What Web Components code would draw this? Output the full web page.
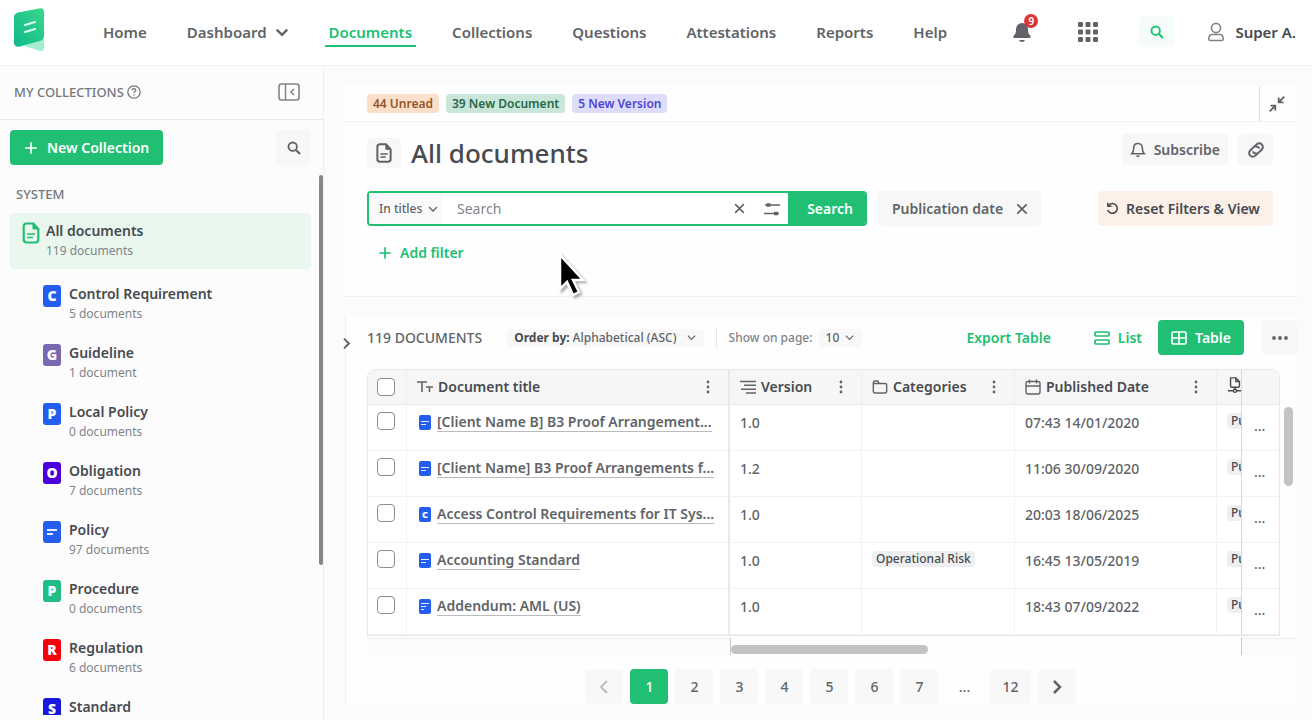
<!DOCTYPE html>
<html lang="en">
<head>
<meta charset="utf-8">
<meta name="viewport" content="width=device-width, initial-scale=1">
<title>All documents</title>
<style>
  :root {
    --green: #20bf73;
    --green-soft: #e9f7ef;
    --ink: #474b50;
    --text: #606468;
    --muted: #808488;
    --line: #e6e7e8;
    --fill: #f7f7f7;
  }
  * { box-sizing: border-box; }
  body {
    margin: 0;
    height: 100vh;
    display: flex;
    flex-direction: column;
    overflow: hidden;
    background: #fbfbfb;
    color: var(--text);
    font-family: "Noto Sans", "Open Sans", sans-serif;
    font-size: 14px;
    font-weight: 500;
    line-height: 20px;
  }
  .layout { flex: 1; min-height: 0; display: flex; }
  .content {
    flex: 1;
    min-width: 0;
    display: flex;
    flex-direction: column;
    margin: 20px 15px 20px 21px;
  }
</style>
</head>
<body>
  <app-header></app-header>
  <div class="layout">
    <collections-panel></collections-panel>
    <main class="content">
      <documents-header></documents-header>
      <documents-view></documents-view>
    </main>
  </div>
  <mouse-pointer></mouse-pointer>

<script>
const ICONS = {
  logo: `<svg viewBox="0 0 32 44"><defs><linearGradient id="g" x1="1" y1="0" x2="0" y2="1"><stop offset="0" stop-color="#3bd68c"/><stop offset="1" stop-color="#10b98b"/></linearGradient></defs>
    <g stroke="none"><path d="M9 38l21-7v9q0 3-3 3-3 0-6-2z" fill="#a5efd0"/>
    <path d="M0 9q0-3 4-4.500L25 .5q5-1 5 4V28q0 4-4 5L6 38.500q-6 1-6-4z" fill="url(#g)"/></g>
    <path d="M11 17l10-3M11 24l10-3" stroke="#d9fff0" stroke-width="2" stroke-linecap="round"/></svg>`,
  chevron: `<svg viewBox="0 0 12 12"><path d="M1.500 4L6 8.500 10.500 4" stroke-width="2"/></svg>`,
  thin: `<svg viewBox="0 0 12 12"><path d="M2 4l4 4 4-4" stroke-width="1.300"/></svg>`,
  left: `<svg viewBox="0 0 16 16"><path d="M11 2L5 8l6 6" stroke-width="2"/></svg>`,
  right: `<svg viewBox="0 0 16 16"><path d="M5 2l6 6-6 6" stroke-width="2.500"/></svg>`,
  bellFull: `<svg viewBox="0 0 20 20"><path d="M10 1c-4 .5-6 3-6 6.500 0 3-.5 4.500-2.500 6.500-.8 1 0 2 1 2h15c1 0 1.800-1 1-2-2-2-2.500-3.500-2.500-6.500C16 4 14 1.500 10 1z" fill="currentColor" stroke="none"/><path d="M7 18h6q-.5 2-3 2t-3-2z" fill="currentColor" stroke="none"/></svg>`,
  bell: `<svg viewBox="0 0 16 16"><path d="M8 1.500C5 1.500 3.700 3.700 3.700 6c0 3-.5 4.200-1.900 5.800h12.400C12.800 10.200 12.300 9 12.300 6c0-2.300-1.300-4.500-4.300-4.500z" stroke-width="1.600"/><path d="M6 13.500h4q-.5 1.700-2 1.700t-2-1.700z" fill="currentColor" stroke="none"/></svg>`,
  apps: `<svg viewBox="0 0 20 20"><g fill="currentColor" stroke="none"><rect width="5" height="5" rx="1"/><rect x="7.500" width="5" height="5" rx="1"/><rect x="15" width="5" height="5" rx="1"/><rect y="7.500" width="5" height="5" rx="1"/><rect x="7.500" y="7.500" width="5" height="5" rx="1"/><rect x="15" y="7.500" width="5" height="5" rx="1"/><rect y="15" width="5" height="5" rx="1"/><rect x="7.500" y="15" width="5" height="5" rx="1"/><rect x="15" y="15" width="5" height="5" rx="1"/></g></svg>`,
  search: `<svg viewBox="0 0 14 14"><circle cx="5.700" cy="5.700" r="4.200" stroke-width="1.900"/><path d="M9 9l4 4" stroke-width="2.200"/></svg>`,
  user: `<svg viewBox="0 0 16 20"><circle cx="8" cy="6" r="4.600"/><path d="M4 12.500h8q3.200.5 3.200 4.200 0 1.800-1.500 1.800H2.300q-1.500 0-1.500-1.800 0-3.700 3.200-4.200z"/></svg>`,
  help: `<svg viewBox="0 0 14 14"><circle cx="7" cy="7" r="6.200" stroke-width="1.300"/><path d="M5.200 5.500q.1-1.800 1.800-1.800t1.800 1.500q0 .8-1 1.300-.8.400-.8 1.400M7 9.300v1.200" stroke-width="1.300"/></svg>`,
  collapse: `<svg viewBox="0 0 22 18"><rect x="1" y="1" width="20" height="16" rx="2.500"/><path d="M7.500 1v16M16 6l-3 3 3 3" stroke-width="1.500"/></svg>`,
  plus: `<svg viewBox="0 0 12 12"><path d="M6 1v10M1 6h10" stroke-width="1.400"/></svg>`,
  doc: `<svg viewBox="0 0 18 22"><path d="M4.500 1.500h6.800l5 5.500v10.500q0 3-3 3H4.700q-3 0-3-3V4.500q0-3 2.800-3z" stroke-width="2.200"/><path d="M11 1.500V7h5z" fill="currentColor" stroke-width="1"/><path d="M5 12h8M5 15.500h6" stroke-width="1.700"/></svg>`,
  shrink: `<svg viewBox="0 0 16 16"><path d="M15.300.7L10 6M9.700 1.500v4.800h4.800M.7 15.300L6 10M1.500 9.700h4.800v4.800" stroke-width="1.800"/></svg>`,
  link: `<svg viewBox="0 0 18 18"><g transform="rotate(-45 9 9)" stroke-width="2"><path d="M8 12.500H4.500a3.600 3.600 0 010-7.200H9a3.600 3.600 0 013.300 5"/><path d="M10 5.500h3.500a3.600 3.600 0 010 7.200H9a3.600 3.600 0 01-3.300-5"/></g></svg>`,
  close: `<svg viewBox="0 0 12 12"><path d="M2 2l8 8M10 2l-8 8" stroke-width="1.500"/></svg>`,
  sliders: `<svg viewBox="0 0 16 14"><path d="M1 3h15M0 11.500h15" stroke-width="1.500"/><path d="M2.500 3h4M10 11.500h4" stroke-width="3.500"/></svg>`,
  reset: `<svg viewBox="0 0 14 14"><path d="M3 3.200a5.300 5.300 0 11-1.200 5.300" stroke-width="1.700"/><path d="M2 .8v3.600h3.800" stroke-width="1.700"/></svg>`,
  list: `<svg viewBox="0 0 16 14"><rect x="1" y="1" width="14" height="4" rx="1" stroke-width="1.700"/><rect x="1" y="9" width="14" height="4" rx="1" stroke-width="1.700"/></svg>`,
  table: `<svg viewBox="0 0 16 14"><rect x="1" y="1" width="14" height="12" rx="1.500" stroke-width="1.700"/><path d="M1 7h14M8 1v12" stroke-width="1.700"/></svg>`,
  more: `<svg viewBox="0 0 16 4"><g fill="currentColor" stroke="none"><circle cx="2" cy="2" r="1.900"/><circle cx="8" cy="2" r="1.900"/><circle cx="14" cy="2" r="1.900"/></g></svg>`,
  kebab: `<svg viewBox="0 0 4 14"><g fill="currentColor" stroke="none"><circle cx="2" cy="2" r="1.400"/><circle cx="2" cy="7" r="1.400"/><circle cx="2" cy="12" r="1.400"/></g></svg>`,
  letters: `<svg viewBox="0 0 16 14"><path d="M0 2h10M5 2v10M9 7h7M12.500 7v5"/></svg>`,
  lines: `<svg viewBox="0 0 16 14"><path d="M0 1.500h16M4 5.300h12M1 9.200h15M6 13h10"/></svg>`,
  folder: `<svg viewBox="0 0 18 16"><path d="M1.500 13V3q0-1.800 1.800-1.800h3.200L8 4h6.700q1.800 0 1.800 1.800V13q0 1.800-1.800 1.800H3.300Q1.500 14.800 1.500 13zM1.500 4H8"/></svg>`,
  calendar: `<svg viewBox="0 0 16 16"><rect x="1" y="2.500" width="14" height="12.500" rx="2" stroke-width="1.400"/><path d="M1 7h14M4.500.5v4M11.500.5v4" stroke-width="1.400"/></svg>`,
  status: `<svg viewBox="0 0 16 18"><path d="M3 1h6l4 4v5q0 1.500-1.500 1.500h-7Q3 11.500 3 10zM9 1v4h4M8 11.500V14M0 15.500h6M10 15.500h6"/><circle cx="8" cy="15.500" r="1.800"/></svg>`
};

const TYPES = {
  C: { colour: '#245ef0', mark: 'C' },
  G: { colour: '#7a68b3', mark: 'G' },
  L: { colour: '#245ef0', mark: 'P' },
  O: { colour: '#4b00dc', mark: 'O' },
  policy: { colour: '#245ef0', lines: '<i></i><i class="short"></i>' },
  addendum: { colour: '#245ef0', lines: '<i></i><i class="short"></i><i class="dot"></i>' },
  P: { colour: '#20bd87', mark: 'P' },
  R: { colour: '#f5000c', mark: 'R' },
  S: { colour: '#1717dd', mark: 'S' }
};

const COLLECTIONS = [
  ['C', 'Control Requirement', '5 documents'],
  ['G', 'Guideline', '1 document'],
  ['L', 'Local Policy', '0 documents'],
  ['O', 'Obligation', '7 documents'],
  ['policy', 'Policy', '97 documents'],
  ['P', 'Procedure', '0 documents'],
  ['R', 'Regulation', '6 documents'],
  ['S', 'Standard', '']
];

const DOCUMENTS = [
  { type: 'policy', title: '[Client Name B] B3 Proof Arrangement...', version: '1.0', date: '07:43 14/01/2020' },
  { type: 'policy', title: '[Client Name] B3 Proof Arrangements f...', version: '1.2', date: '11:06 30/09/2020' },
  { type: 'C', title: 'Access Control Requirements for IT Sys...', version: '1.0', date: '20:03 18/06/2025' },
  { type: 'policy', title: 'Accounting Standard', version: '1.0', category: 'Operational Risk', date: '16:45 13/05/2019' },
  { type: 'addendum', title: 'Addendum: AML (US)', version: '1.0', date: '18:43 07/09/2022' }
];

// Shared by every shadow root
const BASE = `
  * { box-sizing: border-box; }
  button, input, select { font: inherit; color: inherit; margin: 0; padding: 0; border: 0; background: none; }
  button { cursor: pointer; }
  a { color: inherit; text-decoration: none; }
  select { appearance: none; cursor: pointer; }
`;

class BaseElement extends HTMLElement {
  constructor() {
    super();
    this.attachShadow({ mode: 'open' });
  }

  connectedCallback() {
    const template = document.createElement('template');
    template.innerHTML = `<style>${BASE}</style>` + this.render();
    this.shadowRoot.replaceChildren(template.content.cloneNode(true));
  }
}

class UiIcon extends BaseElement {
  render() {
    return `
      <style>
        :host { display: inline-block; flex: none; width: 16px; height: 16px; }
        svg { display: block; width: 100%; height: 100%; fill: none; stroke: currentColor; stroke-width: 1.600; overflow: visible; }
      </style>
      ${ICONS[this.getAttribute('name')]}
    `;
  }
}

class TypeBadge extends BaseElement {
  render() {
    const type = TYPES[this.getAttribute('type')];
    return `
      <style>
        :host {
          display: inline-flex; flex-direction: column; align-items: center; justify-content: center;
          flex: none; width: 18px; height: 22px; border-radius: 3px;
          background: ${type.colour}; color: #fff;
          font-size: 14px; font-weight: 900; line-height: 22px;
        }
        :host([small]) { width: 12px; height: 15px; border-radius: 2px; font-size: 9px; line-height: 15px; }
        i { width: 10px; height: 2px; margin: 1px 0; background: #e4ecff; }
        .short { width: 6px; margin-right: 4px; }
        .dot { width: 3px; margin-right: 7px; }
        :host([small]) i { width: 8px; height: 1px; }
        :host([small]) .short { width: 5px; margin-right: 3px; }
        :host([small]) .dot { width: 3px; margin-right: 5px; }
      </style>
      ${type.mark || type.lines}
    `;
  }
}

class UiTag extends BaseElement {
  render() {
    return `
      <style>
        :host {
          display: inline-block; padding: 0 6px; border-radius: 4px;
          font-size: 12px; font-weight: 600; line-height: 19px; background: #eeeff0; white-space: nowrap;
        }
        :host([tone="orange"]) { background: #fbdfc8; color: #94552b; }
        :host([tone="green"]) { background: #c9e6d8; color: #28694b; }
        :host([tone="violet"]) { background: #dddcfb; color: #4e46ce; }
        :host([tone="grey"]) { padding: 0 4px; font-weight: 500; line-height: 16px; color: var(--ink); }
      </style>
      <slot></slot>
    `;
  }
}

class UiButton extends BaseElement {
  render() {
    return `
      <style>
        :host { display: inline-flex; flex: none; }
        button {
          display: flex; align-items: center; justify-content: center; gap: 8px;
          height: 35px; min-width: 35px; padding: 0 8px; border-radius: 4px;
          font-weight: 600; white-space: nowrap;
        }
        :host([kind="primary"]) button { padding: 0 13px; background: var(--green); color: #fff; }
        :host([kind="soft"]) button { background: var(--fill); }
        :host([kind="warm"]) button { padding: 0 13px 0 8px; background: #fcf0e8; color: var(--ink); gap: 7px; }
        :host([kind="link"]) button { color: var(--green); }
        :host([kind="chip"]) button { padding: 0 12px 0 14px; gap: 12px; background: var(--fill); }
        :host([low]) button { height: 31px; }
        :host([wide]) button { padding: 0 14px; gap: 9px; }
      </style>
      <button type="button" aria-label="${this.getAttribute('label') || this.textContent.trim()}"><slot></slot></button>
    `;
  }
}

class NavItem extends BaseElement {
  render() {
    return `
      <style>
        :host { display: block; }
        a {
          display: flex; align-items: center; gap: 8px; padding: 5px 4px 3px;
          border-bottom: 2px solid transparent; font-weight: 600; white-space: nowrap;
        }
        :host([active]) a { color: var(--green); border-color: var(--green); }
      </style>
      <a href="#"><slot></slot></a>
    `;
  }
}

class AppHeader extends BaseElement {
  render() {
    return `
      <style>
        :host {
          display: flex; align-items: center; flex: none; height: 66px; padding: 0 16px 2px 14px;
          background: #fff; border-bottom: 1px solid #f3f3f3; font-size: 15px;
        }
        .logo { width: 32px; height: 44px; }
        nav { display: flex; gap: 32px; margin-left: 53px; }
        nav ui-icon { width: 14px; height: 14px; }
        .tools { display: flex; align-items: center; margin-left: auto; color: var(--text); }
        .bell { position: relative; display: flex; margin-right: 46px; }
        .bell ui-icon, .apps ui-icon { width: 20px; height: 20px; display: block; }
        .count {
          position: absolute; top: -8px; right: -6px; width: 14px; height: 14px; border-radius: 7px;
          background: #d93636; color: #fff; font-size: 10px; font-weight: 600; line-height: 14px;
        }
        .apps { margin-right: 41px; }
        .find { margin-right: 34px; --fill: #f6fdf9; color: var(--green); }
        .find ui-icon { width: 14px; height: 14px; }
        .user { display: flex; align-items: center; gap: 11px; color: var(--ink); font-weight: 600; }
        .user ui-icon { width: 16px; height: 20px; color: var(--muted); }
      </style>
      <a href="#" aria-label="Start"><ui-icon class="logo" name="logo"></ui-icon></a>
      <nav>
        <nav-item>Home</nav-item>
        <nav-item>Dashboard <ui-icon name="chevron"></ui-icon></nav-item>
        <nav-item active>Documents</nav-item>
        <nav-item>Collections</nav-item>
        <nav-item>Questions</nav-item>
        <nav-item>Attestations</nav-item>
        <nav-item>Reports</nav-item>
        <nav-item>Help</nav-item>
      </nav>
      <div class="tools">
        <button class="bell" type="button" aria-label="Notifications"><ui-icon name="bellFull"></ui-icon><span class="count">9</span></button>
        <button class="apps" type="button" aria-label="Apps"><ui-icon name="apps"></ui-icon></button>
        <ui-button class="find" kind="soft" low label="Find"><ui-icon name="search"></ui-icon></ui-button>
        <a class="user" href="#"><ui-icon name="user"></ui-icon>Super A.</a>
      </div>
    `;
  }
}

class CollectionItem extends BaseElement {
  render() {
    return `
      <style>
        :host { display: block; margin-left: 33px; height: 59px; }
        :host([active]) { margin: 0 8px 7px 0; height: 56px; border-radius: 4px; background: var(--green-soft); }
        a { display: flex; align-items: flex-start; gap: 8px; padding-top: 8px; }
        :host([active]) a { padding-left: 12px; gap: 6px; }
        .text { display: flex; flex-direction: column; }
        .name { color: var(--ink); font-weight: 600; line-height: 20px; }
        .count { color: var(--muted); font-size: 12px; font-weight: 400; line-height: 20px; }
        ::slotted(*) { margin-top: 1px; }
      </style>
      <a href="#">
        <slot></slot>
        <span class="text">
          <span class="name">${this.getAttribute('name')}</span>
          <span class="count">${this.getAttribute('count')}</span>
        </span>
      </a>
    `;
  }
}

class CollectionsPanel extends BaseElement {
  render() {
    const items = COLLECTIONS.map(([type, name, count]) => `
      <collection-item name="${name}" count="${count}"><type-badge type="${type}"></type-badge></collection-item>
    `).join('');

    return `
      <style>
        :host {
          display: flex; flex-direction: column; flex: none; width: 324px;
          background: #fcfcfc; border-right: 1px solid #f0f0f0; padding-bottom: 5px;
        }
        .head {
          display: flex; align-items: center; gap: 3px; height: 54px; padding: 0 23px 2px 14px;
          border-bottom: 1px solid var(--line); color: #74787c; font-size: 13px;
        }
        .head button { display: flex; }
        .head .help { width: 14px; height: 14px; }
        .head .fold { margin-left: auto; }
        .fold ui-icon { width: 22px; height: 18px; color: var(--muted); }
        .actions { display: flex; justify-content: space-between; padding: 10px 12px 10px 10px; }
        .actions ui-icon { width: 14px; height: 14px; }
        .scroll { flex: 1; min-height: 0; display: flex; }
        .list { flex: 1; padding-left: 10px; overflow: hidden; }
        h2 { margin: 0 0 0 6px; color: #74787c; font-size: 13px; font-weight: 500; line-height: 38px; }
        .list .all { width: 18px; height: 22px; color: var(--green); }
        .thumb { width: 4px; height: 390px; border-radius: 2px; background: #85888b; }
      </style>
      <div class="head">
        MY COLLECTIONS <ui-icon class="help" name="help"></ui-icon>
        <button class="fold" type="button" aria-label="Hide collections"><ui-icon name="collapse"></ui-icon></button>
      </div>
      <div class="actions">
        <ui-button kind="primary" wide><ui-icon name="plus"></ui-icon>New Collection</ui-button>
        <ui-button kind="soft" label="Find collection"><ui-icon name="search"></ui-icon></ui-button>
      </div>
      <div class="scroll">
        <div class="list">
          <h2>SYSTEM</h2>
          <collection-item active name="All documents" count="119 documents"><ui-icon class="all" name="doc"></ui-icon></collection-item>
          ${items}
        </div>
        <div class="thumb"></div>
      </div>
    `;
  }
}

class SearchBar extends BaseElement {
  render() {
    return `
      <style>
        :host { display: block; flex: 0 1 500px; min-width: 0; }
        form { display: flex; height: 35px; border: 2px solid var(--green); border-radius: 4px; background: #fff; overflow: hidden; }
        .scope { display: flex; align-items: center; gap: 4px; padding: 0 4px 0 10px; background: #fafafa; font-size: 12px; }
        .scope ui-icon { width: 12px; height: 12px; }
        input { flex: 1; min-width: 0; padding-left: 14px; outline: 0; font-weight: 400; }
        input::placeholder { color: var(--muted); opacity: 1; }
        button { display: flex; align-items: center; padding: 0 10px; }
        .clear ui-icon { width: 13px; height: 13px; }
        .tune { padding: 0 8px; }
        .tune ui-icon { width: 16px; height: 14px; }
        .go { padding: 0 12px 0 19px; background: var(--green); color: #fff; font-weight: 600; }
      </style>
      <form>
        <label class="scope">
          <select aria-label="Search scope"><option>In titles</option></select>
          <ui-icon name="thin"></ui-icon>
        </label>
        <input type="text" placeholder="Search" aria-label="Search">
        <button class="clear" type="button" aria-label="Clear"><ui-icon name="close"></ui-icon></button>
        <button class="tune" type="button" aria-label="Options"><ui-icon name="sliders"></ui-icon></button>
        <button class="go" type="button">Search</button>
      </form>
    `;
  }
}

class DocumentsHeader extends BaseElement {
  render() {
    return `
      <style>
        :host { display: block; background: #fefefe; border-bottom: 1px solid #f0f0f0; padding-bottom: 26px; }
        .tags { display: flex; align-items: center; gap: 7px; height: 36px; padding-left: 22px; border-bottom: 1px solid #f3f3f3; }
        .tags button { display: flex; align-items: center; align-self: stretch; margin-left: auto; width: 38px; padding-left: 9px; border-left: 1px solid #dcdddd; }
        .row { display: flex; align-items: center; padding: 0 24px 0 22px; }
        .title { gap: 10px; height: 61px; }
        .title ui-button { margin-bottom: 6px; }
        .mark { display: flex; justify-content: center; padding: 5px 8px; background: var(--fill); border-radius: 4px; }
        .mark ui-icon { width: 18px; height: 20px; }
        h1 { flex: 1; margin: 0; color: var(--ink); font-size: 26px; font-weight: 500; line-height: 36px; }
        .filters { gap: 11px; margin-top: 8px; }
        .filters .reset { margin-left: auto; }
        .add { margin-top: 9px; }
        .add ui-icon { width: 14px; height: 14px; margin-left: 3px; }
        .reset ui-icon { width: 13px; height: 13px; }
        .chip ui-icon { width: 14px; height: 14px; }
        .link ui-icon { width: 18px; height: 18px; }
      </style>
      <div class="tags">
        <ui-tag tone="orange">44 Unread</ui-tag>
        <ui-tag tone="green">39 New Document</ui-tag>
        <ui-tag tone="violet">5 New Version</ui-tag>
        <button type="button" aria-label="Collapse header"><ui-icon name="shrink"></ui-icon></button>
      </div>
      <div class="row title">
        <span class="mark"><ui-icon name="doc"></ui-icon></span>
        <h1>All documents</h1>
        <ui-button kind="soft" low><ui-icon name="bell"></ui-icon>Subscribe</ui-button>
        <ui-button class="link" kind="soft" low label="Copy link"><ui-icon name="link"></ui-icon></ui-button>
      </div>
      <div class="row filters">
        <search-bar></search-bar>
        <ui-button class="chip" kind="chip">Publication date <ui-icon name="close"></ui-icon></ui-button>
        <ui-button class="reset" kind="warm"><ui-icon name="reset"></ui-icon>Reset Filters &amp; View</ui-button>
      </div>
      <div class="row add">
        <ui-button kind="link"><ui-icon name="plus"></ui-icon>Add filter</ui-button>
      </div>
    `;
  }
}

class ListToolbar extends BaseElement {
  render() {
    return `
      <style>
        :host { display: flex; align-items: center; height: 35px; }
        h2 { margin: 0 25px 0 0; font-size: 14px; font-weight: 500; white-space: nowrap; }
        label { display: flex; align-items: center; font-size: 12px; white-space: nowrap; }
        .pick { display: flex; align-items: center; gap: 8px; height: 18px; padding: 0 7px; border-radius: 4px; background: #f8f8f8; }
        .pick ui-icon { width: 11px; height: 11px; }
        .order b { color: var(--ink); font-weight: 700; }
        .order .pick { gap: 3px; }
        .order ui-icon { margin-left: 6px; }
        .count { margin-left: 12px; padding-left: 12px; border-left: 1px solid var(--line); color: var(--muted); }
        .count .pick { gap: 4px; margin-left: 6px; color: var(--text); }
        .views { display: flex; align-items: center; margin-left: auto; }
        .views ui-icon { width: 16px; height: 14px; }
        .export { margin-right: 27px; }
        .more { margin-left: 18px; }
        .views .more ui-icon { width: 16px; height: 4px; }
        .list { margin-right: 8px; }
      </style>
      <h2>119 DOCUMENTS</h2>
      <label class="order">
        <span class="pick"><b>Order by:</b><select><option>Alphabetical (ASC)</option></select><ui-icon name="thin"></ui-icon></span>
      </label>
      <label class="count">Show on page:
        <span class="pick"><select><option>10</option></select><ui-icon name="thin"></ui-icon></span>
      </label>
      <div class="views">
        <ui-button class="export" kind="link">Export Table</ui-button>
        <ui-button class="list" kind="link"><ui-icon name="list"></ui-icon>List</ui-button>
        <ui-button kind="primary"><ui-icon name="table"></ui-icon>Table</ui-button>
        <ui-button class="more" kind="soft" label="More"><ui-icon name="more"></ui-icon></ui-button>
      </div>
    `;
  }
}

class DocumentsTable extends BaseElement {
  render() {
    const rows = DOCUMENTS.map(doc => `
      <tr>
        <td class="tick"><input type="checkbox" aria-label="Select ${doc.title}"></td>
        <td class="pinned"><div class="name"><type-badge small type="${doc.type}"></type-badge><a href="#">${doc.title}</a></div></td>
        <td>${doc.version}</td>
        <td class="tag">${doc.category ? `<ui-tag tone="grey">${doc.category}</ui-tag>` : ''}</td>
        <td>${doc.date}</td>
        <td class="tag status"><ui-tag tone="grey">Pu</ui-tag></td>
        <td class="actions"><button type="button" aria-label="Row actions">...</button></td>
      </tr>
    `).join('');

    const head = (icon, text) => `
      <div class="head"><ui-icon name="${icon}"></ui-icon><span>${text}</span><button type="button" aria-label="${text} menu"><ui-icon class="kebab" name="kebab"></ui-icon></button></div>
    `;

    return `
      <style>
        :host { display: grid; grid-template-columns: 1fr 17px; }
        .frame { border: 1px solid var(--line); border-radius: 8px 8px 0 0; overflow: hidden; background: #fff; }
        table { width: 100%; table-layout: fixed; border-collapse: separate; border-spacing: 0; }
        th, td { padding: 0 0 0 10px; text-align: left; font-weight: 500; border-bottom: 1px solid #f2f2f2; border-right: 1px solid #f2f2f2; overflow: hidden; white-space: nowrap; }
        th { height: 35px; background: #f6f6f7; color: var(--ink); font-weight: 600; border-color: var(--line); border-right-color: #eeefef; vertical-align: middle; }
        td { height: 46px; padding-top: 8px; vertical-align: top; }
        tr > :first-child { padding-left: 9px; }
        tr > :last-child { border-right: 0; }
        .c-tick { width: 39px; } .c-version { width: 132px; } .c-category { width: 153px; }
        .c-date { width: 202px; } .c-status { width: 25px; } .c-actions { width: 37px; }
        input { display: block; appearance: none; width: 18px; height: 18px; border: 1px solid #8b8e91; border-radius: 4px; background: #fff; }
        tr > .pinned { border-right: 2px solid #e8e9ea; }
        .tick { padding-top: 7px; }
        .tag { padding-top: 5px; }
        tr > .status { border-right: 1px solid #d5d7dc; text-overflow: clip; }
        .actions { padding: 13px 0 0 12px; line-height: 16px; }
        th.actions { padding: 0; }
        .head { display: flex; align-items: center; gap: 5px; }
        .head ui-icon { color: var(--text); }
        .head button { margin-left: auto; margin-right: 17px; display: flex; padding: 0 1px; }
        .head .kebab { width: 4px; height: 14px; }
        .name { display: flex; align-items: center; gap: 6px; padding: 0 11px 0 2px; font-weight: 600; }
        .name a { border-bottom: 1px solid #b9bbbd; line-height: 18px; }
        .rail { padding: 38px 4px 0 4px; }
        .thumb-y { width: 9px; height: 79px; border-radius: 5px; background: #c3c3c3; }
        .foot { display: grid; grid-template-columns: 1fr 512px 55px; grid-column: 1 / -1; height: 17px; margin-top: 2px; }
        .foot > div { border-top: 1px solid #ededed; background: #fbfbfb; }
        .foot .track { border-top: 0; border-left: 1px solid #c9c9c9; border-right: 1px solid #c9c9c9; padding-top: 7px; background: none; }
        .thumb-x { width: 197px; height: 9px; border-radius: 5px; background: #c3c3c3; }
      </style>
      <div class="frame">
        <table>
          <colgroup>
            <col class="c-tick"><col><col class="c-version"><col class="c-category"><col class="c-date"><col class="c-status"><col class="c-actions">
          </colgroup>
          <thead>
            <tr>
              <th><input type="checkbox" aria-label="Select all"></th>
              <th class="pinned">${head('letters', 'Document title')}</th>
              <th>${head('lines', 'Version')}</th>
              <th>${head('folder', 'Categories')}</th>
              <th>${head('calendar', 'Published Date')}</th>
              <th class="status"><ui-icon name="status"></ui-icon></th>
              <th class="actions"></th>
            </tr>
          </thead>
          <tbody>${rows}</tbody>
        </table>
      </div>
      <div class="rail"><div class="thumb-y"></div></div>
      <div class="foot"><div></div><div class="track"><div class="thumb-x"></div></div><div></div></div>
    `;
  }
}

class PageNav extends BaseElement {
  render() {
    const pages = [1, 2, 3, 4, 5, 6, 7, '...', 12].map(page => {
      if (page === '...') return '<span>...</span>';
      return `<button type="button"${page === 1 ? ' class="current" aria-current="page"' : ''}>${page}</button>`;
    }).join('');

    return `
      <style>
        :host { display: block; }
        nav { display: flex; justify-content: center; gap: 7px; padding-right: 3px; }
        button, span { min-width: 38px; height: 35px; border-radius: 4px; padding: 0 12px; text-align: center; line-height: 35px; }
        button { background: #f8f8f8; }
        .arrow { display: flex; align-items: center; justify-content: center; padding: 0; }
        .arrow:disabled { color: #bbbdbf; }
        .current { background: var(--green); color: #fff; }
      </style>
      <nav aria-label="Pages">
        <button class="arrow" type="button" disabled aria-label="Previous"><ui-icon name="left"></ui-icon></button>
        ${pages}
        <button class="arrow" type="button" aria-label="Next"><ui-icon name="right"></ui-icon></button>
      </nav>
    `;
  }
}

class DocumentsView extends BaseElement {
  render() {
    return `
      <style>
        :host { display: flex; flex: 1; margin-top: 18px; background: #fefefe; border-left: 1px solid #eeeeee; }
        .fold { flex: none; align-self: flex-start; display: flex; width: 21px; margin-top: 22px; }
        .fold ui-icon { width: 13px; height: 13px; margin-left: -6px; }
        .body { flex: 1; min-width: 0; padding-top: 5px; }
        documents-table { margin-top: 14px; }
        page-nav { margin-top: 14px; }
      </style>
      <button class="fold" type="button" aria-label="Show panel"><ui-icon name="right"></ui-icon></button>
      <div class="body">
        <list-toolbar></list-toolbar>
        <documents-table></documents-table>
        <page-nav></page-nav>
      </div>
    `;
  }
}

class MousePointer extends BaseElement {
  render() {
    return `
      <style>
        :host { position: absolute; left: 557px; top: 252px; width: 30px; height: 46px; pointer-events: none; }
        svg { display: block; filter: drop-shadow(2px 2px 1px #0005); }
      </style>
      <svg width="30" height="46" viewBox="0 0 30 46">
        <path d="M3 3v34l7-7 6 13 6-3-6-12h10z" fill="#000" stroke="#fff" stroke-width="2.500"/>
      </svg>
    `;
  }
}

customElements.define('ui-icon', UiIcon);
customElements.define('type-badge', TypeBadge);
customElements.define('ui-tag', UiTag);
customElements.define('ui-button', UiButton);
customElements.define('nav-item', NavItem);
customElements.define('app-header', AppHeader);
customElements.define('collection-item', CollectionItem);
customElements.define('collections-panel', CollectionsPanel);
customElements.define('search-bar', SearchBar);
customElements.define('documents-header', DocumentsHeader);
customElements.define('list-toolbar', ListToolbar);
customElements.define('documents-table', DocumentsTable);
customElements.define('page-nav', PageNav);
customElements.define('documents-view', DocumentsView);
customElements.define('mouse-pointer', MousePointer);
</script>
</body>
</html>
